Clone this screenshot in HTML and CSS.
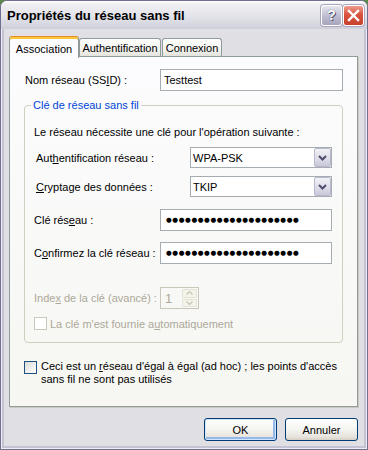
FILE: index.html
```html
<!DOCTYPE html>
<html lang="fr">
<head>
  <meta charset="UTF-8" />
  <title>Propriétés du réseau sans fil</title>
  <link rel="stylesheet" href="styles.css">
</head>
<body>

  <div class="window">

    <!-- TITLE BAR -->
    <div class="titlebar">
      <span class="title">Propriétés du réseau sans fil</span>
      <div class="caption-buttons">
        <div class="cap help">?</div>
        <div class="cap close">
          <svg width="13" height="13" viewBox="0 0 13 13">
            <path d="M2 2 L11 11 M11 2 L2 11" stroke="#fff" stroke-width="2.4" stroke-linecap="square" fill="none" />
          </svg>
        </div>
      </div>
    </div>

    <div class="frame">
      <div class="client">

        <!-- TABS -->
        <div class="tabs">
          <div class="tab active tab-assoc">Association</div>
          <div class="tab tab-auth">Authentification</div>
          <div class="tab tab-conn">Connexion</div>
        </div>

        <!-- TAB PAGE -->
        <div class="pane">
          <div class="ssid-row">
            <span class="ssid-label">Nom réseau (SS<u>I</u>D) :</span>
            <div class="textbox ssid-box">Testtest</div>
          </div>

          <fieldset class="group">
            <legend>Clé de réseau sans fil</legend>
            <p class="intro">Le réseau nécessite une clé pour l'opération suivante :</p>

            <div class="field-row combo-row first">
              <span class="combo-label">Aut<u>h</u>entification réseau :</span>
              <div class="combo">
                <span class="combo-value">WPA-PSK</span>
                <span class="combo-btn">
                  <svg width="9" height="6" viewBox="0 0 9 6"><path d="M1 1 L4.5 4.5 L8 1" stroke="#4d4d6d" stroke-width="2" fill="none" /></svg>
                </span>
              </div>
            </div>

            <div class="field-row combo-row">
              <span class="combo-label"><u>C</u>ryptage des données :</span>
              <div class="combo">
                <span class="combo-value">TKIP</span>
                <span class="combo-btn">
                  <svg width="9" height="6" viewBox="0 0 9 6"><path d="M1 1 L4.5 4.5 L8 1" stroke="#4d4d6d" stroke-width="2" fill="none" /></svg>
                </span>
              </div>
            </div>

            <div class="field-row key-row first-key">
              <span class="key-label">Clé rés<u>e</u>au :</span>
              <div class="textbox key-box"><span class="dots">●●●●●●●●●●●●●●●●●●●●●</span></div>
            </div>

            <div class="field-row key-row confirm">
              <span class="key-label">C<u>o</u>nfirmez la clé réseau :</span>
              <div class="textbox key-box"><span class="dots">●●●●●●●●●●●●●●●●●●●●●</span></div>
            </div>

            <div class="field-row index-row disabled">
              <span class="key-label">Inde<u>x</u> de la clé (avancé) :</span>
              <div class="spinner">
                <span class="spin-value">1</span>
                <span class="spin-btns">
                  <span class="spin-btn"><svg width="7" height="4" viewBox="0 0 7 4"><path d="M0.5 3.5 L3.5 0.5 L6.5 3.5" stroke="#c9c7ba" stroke-width="1.4" fill="none" /></svg></span>
                  <span class="spin-btn"><svg width="7" height="4" viewBox="0 0 7 4"><path d="M0.5 0.5 L3.5 3.5 L6.5 0.5" stroke="#c9c7ba" stroke-width="1.4" fill="none" /></svg></span>
                </span>
              </div>
            </div>

            <div class="check-row disabled">
              <span class="checkbox off"></span>
              <span>La clé m'est fournie a<u>u</u>tomatiquement</span>
            </div>
          </fieldset>

          <div class="adhoc-row">
            <span class="checkbox"></span>
            <span class="adhoc-text">Ceci est un <u>r</u>éseau d'égal à égal (ad hoc) ; les points d'accès<br>sans fil ne sont pas utilisés</span>
          </div>
        </div>

        <!-- DIALOG BUTTONS -->
        <div class="buttons">
          <button class="btn default">OK</button>
          <button class="btn">Annuler</button>
        </div>

      </div>
    </div>
  </div>

</body>
</html>
```

FILE: styles.css
```css
/* RESET */
* {
  margin: 0;
  padding: 0;
  box-sizing: border-box;
}

body {
  width: 368px;
  height: 450px;
  overflow: hidden;
  background-color: #5b8b4c; /* desktop behind the rounded corners */
  font-family: "Liberation Sans", Arial, sans-serif;
  font-size: 11px;
  color: #000;
}

u {
  text-decoration: underline;
  text-underline-offset: 1px;
}

/* Outer window */
.window {
  width: 368px;
  height: 450px;
  display: flex;
  flex-direction: column;
  border: 1px solid #6f6e8e;
  border-radius: 7px 7px 0 0;
  background-color: #e0dfe3;
  overflow: hidden;
}

/* Title bar (silver theme) */
.titlebar {
  height: 28px;
  display: flex;
  align-items: center;
  padding: 0 3px 0 6px;
  background: linear-gradient(#ffffff 0, #efeff3 3px, #e3e3ea 55%, #cfcfdb 100%);
}
.title {
  flex: 1;
  font-size: 13px;
  font-weight: bold;
  color: #000;
  padding-top: 1px;
}
.caption-buttons {
  display: flex;
  gap: 1px;
}
.cap {
  width: 21px;
  height: 21px;
  border: 1px solid #fff;
  border-radius: 3px;
  display: flex;
  align-items: center;
  justify-content: center;
  box-shadow: 0 0 0 1px #a7a6bd;
}
.help {
  background: linear-gradient(#e6e6ef, #b9b8cd 60%, #a6a5be);
  color: #fff;
  font-weight: bold;
  font-size: 14px;
  text-shadow: 0 0 1px #4c4b66, 1px 1px 0 #5e5d78;
}
.close {
  background: linear-gradient(#ee9d8e, #d9533f 45%, #c7402d);
}

/* Frame around the client area */
.frame {
  flex: 1;
  display: flex;
  padding: 0 3px 3px;
  background-color: #c4c3d4;
  box-shadow: inset 1px 0 0 #eeeef4, inset -1px 0 0 #eeeef4, inset 0 -1px 0 #eeeef4;
}
.client {
  flex: 1;
  background-color: #e0dfe3;
  padding: 0 6px 0 5px;
}

/* TABS */
.tabs {
  display: flex;
  align-items: flex-end;
  height: 20px;
  margin-top: 7px;
  position: relative;
  z-index: 1;
}
.tab {
  height: 18px;
  border: 1px solid #919b9c;
  border-bottom: none;
  border-radius: 3px 3px 0 0;
  background: linear-gradient(#ffffff, #f3f3ef 60%, #e4e3dc);
  display: flex;
  align-items: center;
  justify-content: center;
  padding-top: 1px;
}
.tab.active {
  height: 22px;
  margin-bottom: -2px;
  border-top: 1px solid #e68b2c;
  background: #fcfcfe;
  box-shadow: inset 0 2px 0 #ffc83c;
  padding-top: 2px;
}
.tab-assoc { width: 70px; }
.tab-auth { width: 82px; }
.tab-conn { width: 60px; margin-left: 1px; }

/* TAB PAGE */
.pane {
  height: 351px;
  border: 1px solid #919b9c;
  background: linear-gradient(#fcfcfe, #f6f6f2);
  box-shadow: 1px 1px 0 #c9c9bd;
  padding: 12px 0 0 14px;
}

.ssid-row {
  display: flex;
  align-items: center;
  height: 22px;
  padding-left: 1px;
}
.ssid-label {
  width: 135px;
}
.textbox {
  height: 22px;
  border: 1px solid #a5acb2;
  background-color: #fff;
  display: flex;
  align-items: center;
  padding-left: 3px;
  overflow: hidden;
}
.ssid-box {
  width: 183px;
}

/* Group box */
.group {
  margin-top: 8px;
  width: 319px;
  border: 1px solid #d0d0bf;
  border-radius: 4px;
  padding: 14px 0 12px 9px;
}
.group legend {
  margin-left: -3px;
  padding: 0 2px;
  line-height: 13px;
  color: #0046d5;
}
.intro {
  line-height: 13px;
}

.field-row {
  display: flex;
  align-items: center;
}
.combo-row {
  height: 21px;
  margin-top: 8px;
}
.combo-label {
  width: 156px;
  padding-left: 2px;
}
.combo {
  width: 142px;
  height: 21px;
  border: 1px solid #a5acb2;
  background-color: #fff;
  display: flex;
  align-items: center;
  padding-left: 2px;
}
.combo-value {
  flex: 1;
}
.combo-btn {
  width: 17px;
  height: 19px;
  border: 1px solid #b9b8cd;
  border-radius: 2px;
  background: linear-gradient(#f1f1f6, #dcdbe7 60%, #c9c8da);
  display: flex;
  align-items: center;
  justify-content: center;
}

.key-row {
  height: 22px;
  margin-top: 12px;
}
.key-row.confirm {
  margin-top: 11px;
}
.key-label {
  width: 126px;
}
.key-box {
  width: 172px;
  padding-left: 5px;
}
.dots {
  font-family: "DejaVu Sans", sans-serif;
  font-size: 6.6px;
  letter-spacing: 0.6px;
  line-height: 1;
  white-space: nowrap;
}

/* Disabled controls */
.disabled {
  color: #aca899;
}
.index-row {
  height: 22px;
  margin-top: 23px;
}
.spinner {
  width: 39px;
  height: 22px;
  border: 1px solid #c9c7ba;
  display: flex;
  align-items: stretch;
}
.spin-value {
  flex: 1;
  padding-left: 4px;
  display: flex;
  align-items: center;
  font-size: 13px;
}
.spin-btns {
  width: 17px;
  display: flex;
  flex-direction: column;
  padding: 1px;
  gap: 1px;
}
.spin-btn {
  flex: 1;
  background: #f5f4ea;
  border: 1px solid #e5e3d6;
  border-radius: 1px;
  display: flex;
  align-items: center;
  justify-content: center;
}

.check-row {
  display: flex;
  align-items: center;
  gap: 3px;
  height: 13px;
  margin-top: 8px;
}
.checkbox {
  width: 13px;
  height: 13px;
  flex: none;
  border: 1px solid #1c5180;
  background: linear-gradient(135deg, #dcdcd7, #ffffff);
}
.checkbox.off {
  border-color: #cac8bb;
  background: #fff;
}

.adhoc-row {
  display: flex;
  align-items: flex-start;
  gap: 4px;
  margin-top: 17px;
}
.adhoc-row .checkbox {
  margin-top: 1px;
}
.adhoc-text {
  line-height: 13px;
}

/* OK / Annuler */
.buttons {
  display: flex;
  justify-content: flex-end;
  gap: 8px;
  margin-top: 11px;
}
.btn {
  width: 73px;
  height: 23px;
  font-family: inherit;
  font-size: 11px;
  color: #000;
  border: 1px solid #003c74;
  border-radius: 3px;
  background: linear-gradient(#ffffff, #f4f4f0 50%, #e6e4dc 85%, #d6d0c5);
}
.btn.default {
  box-shadow: inset 0 0 0 1px #cee7ff, inset -1px -1px 0 2px #98b8ea;
}
```
